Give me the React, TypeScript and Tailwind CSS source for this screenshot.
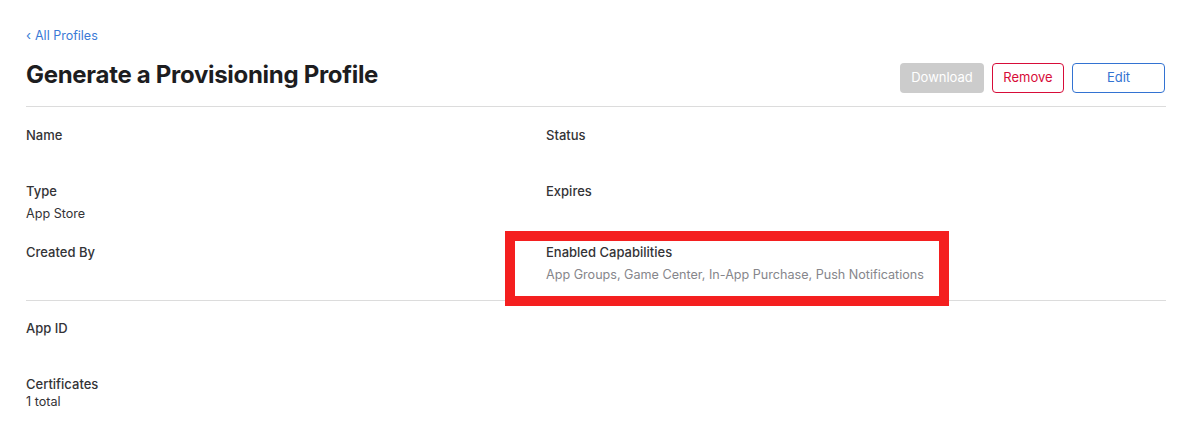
import * as React from "react";

type Field = { label: string; value?: string; muted?: boolean; tight?: boolean };

function Item({ label, value, muted, tight }: Field) {
  return (
    <div className="flex flex-col">
      <div className="h-[18px] text-[13px] leading-[18px] font-medium text-[#333336]">{label}</div>
      {value ? (
        <div
          className={`${tight ? "mt-0" : "mt-[5px]"} h-[18px] text-[12.6px] leading-[18px] ${
            muted ? "text-[#86868b]" : "text-[#333336]"
          }`}
        >
          {value}
        </div>
      ) : (
        <div className="mt-[5px] h-[13px]" />
      )}
    </div>
  );
}

export default function App() {
  return (
    <div className="min-h-[426px] bg-white px-[26px] pt-[27px] font-['Inter','Noto_Sans',sans-serif] text-[#1d1d1f] antialiased" style={{ width: 1193 }}>
      <div className="w-[1140px]">
        <a className="flex h-[17px] items-center gap-[4px] text-[12.5px] leading-[17px] text-[#3b7ad6]">
          <span className="text-[13px]">‹</span>
          <span>All Profiles</span>
        </a>

        <div className="mt-[15px] flex items-start justify-between border-b border-[#dcdcdc] pb-[13px]">
          <h1 className="pt-[1px] text-[24px] leading-[30px] font-bold tracking-[-0.3px] text-[#1d1d1f]">
            Generate a Provisioning Profile
          </h1>
          <div className="mt-[4px] flex gap-[8px] pr-[1px]">
            <button className="h-[30px] w-[84px] rounded-[4px] bg-[#cccccc] text-[13px] text-white">Download</button>
            <button className="h-[30px] w-[72px] rounded-[4px] border border-[#d70c39] text-[13px] text-[#d70c39]">Remove</button>
            <button className="h-[30px] w-[93px] rounded-[4px] border border-[#3373d2] text-[13px] text-[#3373d2]">Edit</button>
          </div>
        </div>

        <div className="grid grid-cols-[520px_1fr] gap-y-[20px] border-b border-[#dcdcdc] pt-[19px] pb-[16px]">
          <Item label="Name" />
          <Item label="Status" />
          <Item label="Type" value="App Store" />
          <Item label="Expires" />
          <Item label="Created By" />
          <div className="relative">
            <Item label="Enabled Capabilities" value="App Groups, Game Center, In-App Purchase, Push Notifications" muted />
            <div className="pointer-events-none absolute top-[-12px] left-[-41px] h-[75px] w-[444px] border-[10px] border-[#f41f1f]" />
          </div>
        </div>

        <div className="flex flex-col gap-[20px] pt-[18px]">
          <Item label="App ID" />
          <Item label="Certificates" value="1 total" tight />
        </div>
      </div>
    </div>
  );
}
